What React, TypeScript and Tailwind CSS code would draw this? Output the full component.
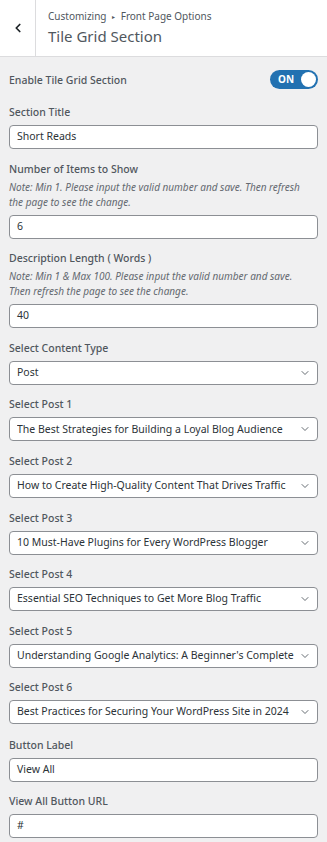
import { ChevronDown, ChevronLeft } from 'lucide-react';

const font = { fontFamily: '"Noto Sans", "Open Sans", sans-serif' };

const posts = [
  'The Best Strategies for Building a Loyal Blog Audience',
  'How to Create High-Quality Content That Drives Traffic',
  '10 Must-Have Plugins for Every WordPress Blogger',
  'Essential SEO Techniques to Get More Blog Traffic',
  "Understanding Google Analytics: A Beginner's Complete Guide",
  'Best Practices for Securing Your WordPress Site in 2024',
];

function Label({ children }: { children: React.ReactNode }) {
  return <div className="h-[16px] leading-[16px] text-[10.5px] font-medium text-[#50575e]">{children}</div>;
}

function Note({ children }: { children: React.ReactNode }) {
  return <p className="mt-[3px] w-[304px] text-[10px] leading-[15px] italic text-[#646970]">{children}</p>;
}

function TextField({ value }: { value: string }) {
  return (
    <div className="mt-[5px] h-[24px] flex items-center px-[7px] bg-white border border-[#8c8f94] rounded-[4px] text-[10.5px] text-[#2c3338]">
      {value}
    </div>
  );
}

function SelectField({ value }: { value: string }) {
  return (
    <div className="mt-[5px] h-[24px] flex items-center pl-[7px] pr-[6px] bg-white border border-[#8c8f94] rounded-[4px] text-[10.5px] text-[#2c3338]">
      <span className="flex-1 whitespace-nowrap overflow-hidden">{value}</span>
      <ChevronDown className="w-[12px] h-[12px] ml-[3px] text-[#50575e] shrink-0" strokeWidth={1.75} />
    </div>
  );
}

export default function App() {
  return (
    <div className="w-[327px] h-[842px] overflow-hidden bg-[#f0f0f1]" style={font}>
      <div className="h-[57px] flex bg-white border-b border-[#dcdcde]">
        <div className="w-[36px] flex items-center justify-center border-r border-[#dcdcde]">
          <ChevronLeft className="w-[14px] h-[14px] text-[#1d2327]" strokeWidth={3} />
        </div>
        <div className="pl-[12px] pt-[9px]">
          <div className="text-[10px] leading-[14px] text-[#50575e]">
            Customizing <span className="text-[6px] align-middle mx-[3px]">▸</span> Front Page Options
          </div>
          <div className="mt-[2px] text-[15px] leading-[20px] font-normal text-[#50575e]">Tile Grid Section</div>
        </div>
      </div>

      <div className="px-[9px] pt-[13px]">
        <div className="flex items-center justify-between h-[19px] mb-[15px]">
          <Label>Enable Tile Grid Section</Label>
          <div className="w-[48px] h-[19px] rounded-full bg-[#2271b1] flex items-center justify-between pl-[8px] pr-[2px]">
            <span className="text-[10px] font-bold text-white">ON</span>
            <span className="w-[15px] h-[15px] rounded-full bg-white" />
          </div>
        </div>

        <div className="mb-[11.6px]">
          <Label>Section Title</Label>
          <TextField value="Short Reads" />
        </div>

        <div className="mb-[11.6px]">
          <Label>Number of Items to Show</Label>
          <Note>Note: Min 1. Please input the valid number and save. Then refresh the page to see the change.</Note>
          <TextField value="6" />
        </div>

        <div className="mb-[11.6px]">
          <Label>Description Length ( Words )</Label>
          <Note>Note: Min 1 &amp; Max 100. Please input the valid number and save. Then refresh the page to see the change.</Note>
          <TextField value="40" />
        </div>

        <div className="mb-[11.6px]">
          <Label>Select Content Type</Label>
          <SelectField value="Post" />
        </div>

        {posts.map((p, i) => (
          <div key={i} className={i === posts.length - 1 ? 'mb-[13px]' : 'mb-[11.6px]'}>
            <Label>Select Post {i + 1}</Label>
            <SelectField value={p} />
          </div>
        ))}

        <div className="mb-[10.5px]">
          <Label>Button Label</Label>
          <TextField value="View All" />
        </div>

        <div>
          <Label>View All Button URL</Label>
          <TextField value="#" />
        </div>
      </div>
    </div>
  );
}
